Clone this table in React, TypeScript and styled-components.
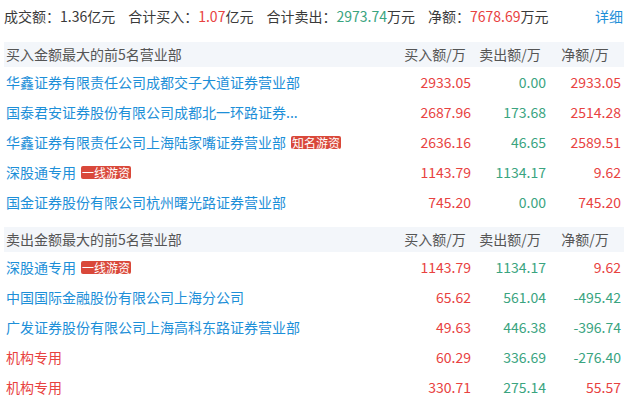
import React from "react";
import styled, { createGlobalStyle } from "styled-components";

const Global = createGlobalStyle`
  html, body { margin: 0; padding: 0; background: #fff; }
  body {
    font-family: "Noto Sans CJK SC", "Microsoft YaHei", "Noto Sans", sans-serif;
    font-size: 14px;
    color: #3a3a3a;
  }
`;

const Wrap = styled.div`
  width: 620px;
  margin-left: 4px;
`;

const Summary = styled.div`
  display: flex;
  align-items: center;
  height: 32px;
  line-height: 32px;
  white-space: nowrap;
`;

const Stat = styled.span`
  margin-right: 13px;
`;

const Value = styled.span<{ $tone?: "up" | "down" }>`
  color: ${(p) => (p.$tone === "up" ? "#e8423f" : p.$tone === "down" ? "#3aa47f" : "inherit")};
`;

const More = styled.a`
  margin-left: auto;
  margin-right: 1px;
  color: #1d8fd8;
  text-decoration: none;
  cursor: pointer;
`;

const Section = styled.div`
  margin-top: 10px;
`;

const HeadRow = styled.div`
  display: grid;
  grid-template-columns: 1fr 75px 75px 75px;
  height: 25px;
  line-height: 25px;
  background: #f3f6fa;
  color: #555;
`;

const HeadTitle = styled.div`
  padding-left: 2px;
`;

const HeadCol = styled.div`
  text-align: center;
  padding-right: 3px;
`;

const Row = styled.div`
  display: grid;
  grid-template-columns: 1fr 75px 75px 75px;
  height: 30px;
  align-items: center;
`;

const Name = styled.div<{ $inst?: boolean }>`
  padding-left: 2px;
  color: ${(p) => (p.$inst ? "#e8423f" : "#1d8fd8")};
  white-space: nowrap;
  display: flex;
  align-items: center;
`;

const Badge = styled.span`
  display: inline-block;
  margin-left: 5px;
  padding: 0 1px;
  height: 13px;
  line-height: 13px;
  font-size: 12px;
  color: #fff;
  background: #d9483a;
  border-radius: 2px;
`;

const Num = styled.div<{ $tone: "up" | "down" }>`
  text-align: right;
  padding-right: 3px;
  color: ${(p) => (p.$tone === "up" ? "#e8423f" : "#3aa47f")};
`;

type Item = {
  name: string;
  badge?: string;
  inst?: boolean;
  buy: string;
  sell: string;
  net: string;
};

const buyList: Item[] = [
  { name: "华鑫证券有限责任公司成都交子大道证券营业部", buy: "2933.05", sell: "0.00", net: "2933.05" },
  { name: "国泰君安证券股份有限公司成都北一环路证券...", buy: "2687.96", sell: "173.68", net: "2514.28" },
  { name: "华鑫证券有限责任公司上海陆家嘴证券营业部", badge: "知名游资", buy: "2636.16", sell: "46.65", net: "2589.51" },
  { name: "深股通专用", badge: "一线游资", buy: "1143.79", sell: "1134.17", net: "9.62" },
  { name: "国金证券股份有限公司杭州曙光路证券营业部", buy: "745.20", sell: "0.00", net: "745.20" },
];

const sellList: Item[] = [
  { name: "深股通专用", badge: "一线游资", buy: "1143.79", sell: "1134.17", net: "9.62" },
  { name: "中国国际金融股份有限公司上海分公司", buy: "65.62", sell: "561.04", net: "-495.42" },
  { name: "广发证券股份有限公司上海高科东路证券营业部", buy: "49.63", sell: "446.38", net: "-396.74" },
  { name: "机构专用", inst: true, buy: "60.29", sell: "336.69", net: "-276.40" },
  { name: "机构专用", inst: true, buy: "330.71", sell: "275.14", net: "55.57" },
];

function Table({ title, items }: { title: string; items: Item[] }) {
  return (
    <Section>
      <HeadRow>
        <HeadTitle>{title}</HeadTitle>
        <HeadCol>买入额/万</HeadCol>
        <HeadCol>卖出额/万</HeadCol>
        <HeadCol>净额/万</HeadCol>
      </HeadRow>
      {items.map((it, i) => (
        <Row key={i}>
          <Name $inst={it.inst}>
            {it.name}
            {it.badge && <Badge>{it.badge}</Badge>}
          </Name>
          <Num $tone="up">{it.buy}</Num>
          <Num $tone="down">{it.sell}</Num>
          <Num $tone={it.net.startsWith("-") ? "down" : "up"}>{it.net}</Num>
        </Row>
      ))}
    </Section>
  );
}

export default function App() {
  return (
    <>
      <Global />
      <Wrap>
        <Summary>
          <Stat>
            成交额：<Value>1.36</Value>亿元
          </Stat>
          <Stat>
            合计买入：<Value $tone="up">1.07</Value>亿元
          </Stat>
          <Stat>
            合计卖出：<Value $tone="down">2973.74</Value>万元
          </Stat>
          <Stat>
            净额：<Value $tone="up">7678.69</Value>万元
          </Stat>
          <More>详细</More>
        </Summary>
        <Table title="买入金额最大的前5名营业部" items={buyList} />
        <Table title="卖出金额最大的前5名营业部" items={sellList} />
      </Wrap>
    </>
  );
}
